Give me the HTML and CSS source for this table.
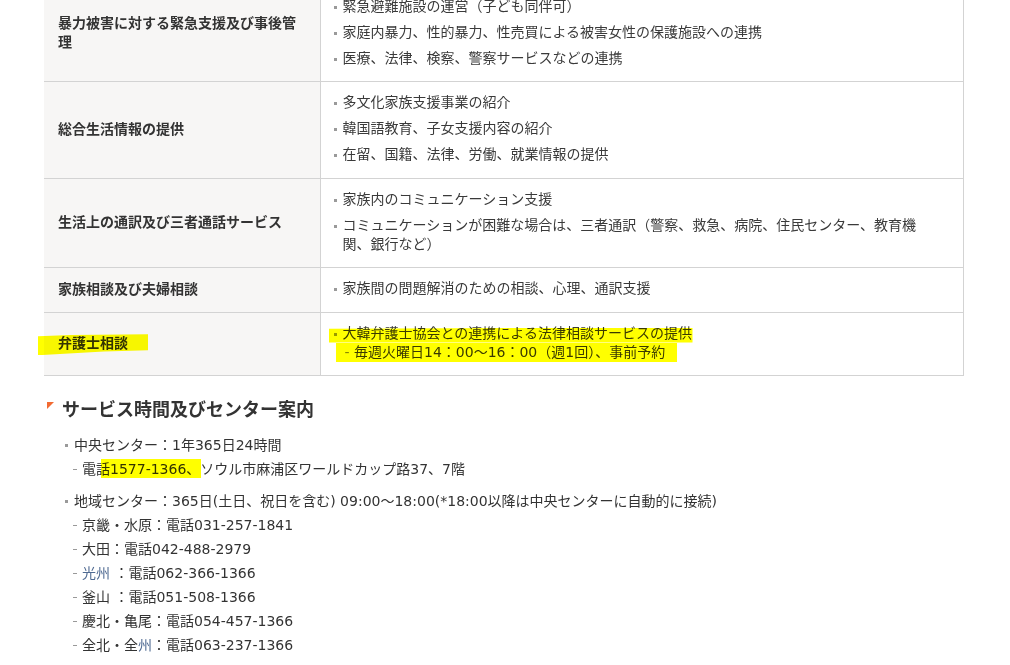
FILE: index.html
```html
<!DOCTYPE html>
<html lang="ja">
<head>
   <meta charset="UTF-8">
   <meta name="viewport" content="width=device-width, initial-scale=1.0">
   <title>サービス案内</title>
   <link rel="stylesheet" href="styles.css">
</head>
<body>
   <div class="page">
      <table class="svc-table">
         <colgroup>
            <col class="col-head">
            <col class="col-body">
         </colgroup>
         <tr>
            <th>暴力被害に対する緊急支援及び事後管理</th>
            <td>
               <ul class="dots">
                  <li>緊急避難施設の運営（子ども同伴可）</li>
                  <li>家庭内暴力、性的暴力、性売買による被害女性の保護施設への連携</li>
                  <li>医療、法律、検察、警察サービスなどの連携</li>
               </ul>
            </td>
         </tr>
         <tr>
            <th>総合生活情報の提供</th>
            <td>
               <ul class="dots">
                  <li>多文化家族支援事業の紹介</li>
                  <li>韓国語教育、子女支援内容の紹介</li>
                  <li>在留、国籍、法律、労働、就業情報の提供</li>
               </ul>
            </td>
         </tr>
         <tr>
            <th>生活上の通訳及び三者通話サービス</th>
            <td>
               <ul class="dots">
                  <li>家族内のコミュニケーション支援</li>
                  <li>コミュニケーションが困難な場合は、三者通訳（警察、救急、病院、住民センター、教育機関、銀行など）</li>
               </ul>
            </td>
         </tr>
         <tr>
            <th>家族相談及び夫婦相談</th>
            <td>
               <ul class="dots">
                  <li>家族間の問題解消のための相談、心理、通訳支援</li>
               </ul>
            </td>
         </tr>
         <tr>
            <th><span class="hl-wrap"><span class="mark mark-head"></span>弁護士相談</span></th>
            <td>
               <ul class="dots">
                  <li>
                     <span class="mark mark-line1"></span>
                     <span class="mark mark-line2"></span>
                     大韓弁護士協会との連携による法律相談サービスの提供<br>
                     <span class="sub-note"><span class="dash">-</span> 毎週火曜日14：00～16：00（週1回）、事前予約</span>
                  </li>
               </ul>
            </td>
         </tr>
      </table>

      <div class="guide">
         <h3>サービス時間及びセンター案内</h3>
         <ul class="info">
            <li>中央センター：1年365日24時間
               <ul class="sub">
                  <li><span class="mark mark-phone"></span>電話1577-1366、ソウル市麻浦区ワールドカップ路37、7階</li>
               </ul>
            </li>
            <li>地域センター：365日(土日、祝日を含む) 09:00～18:00(*18:00以降は中央センターに自動的に接続)
               <ul class="sub">
                  <li>京畿・水原：電話031-257-1841</li>
                  <li>大田：電話042-488-2979</li>
                  <li><span class="blue">光州</span> ：電話062-366-1366</li>
                  <li>釜山 ：電話051-508-1366</li>
                  <li>慶北・亀尾：電話054-457-1366</li>
                  <li>全北・全<span class="blue">州</span>：電話063-237-1366</li>
               </ul>
            </li>
         </ul>
      </div>
   </div>
</body>
</html>
```

FILE: styles.css
```css
body {
   margin: 0;
   font-family: "DejaVu Sans", "Noto Sans CJK JP", sans-serif;
   font-size: 14px;
   color: #333;
   background: #fff;
}
ul {
   list-style: none;
   margin: 0;
   padding: 0;
}
.page {
   margin-top: -15.5px;
   padding-left: 44px;
}

/* service table */
.svc-table {
   width: 920px;
   border-collapse: collapse;
   table-layout: fixed;
   border-top: 1px solid #d3d3d3;
   border-right: 1px solid #d3d3d3;
}
.col-head {
   width: 276px;
}
.svc-table th,
.svc-table td {
   border-bottom: 1px solid #d3d3d3;
   vertical-align: middle;
   line-height: 19px;
}
.svc-table th {
   padding: 0 14px;
   background: #f7f6f5;
   text-align: left;
   font-weight: bold;
   color: #333;
}
.svc-table td {
   border-left: 1px solid #d3d3d3;
   padding: 11px 40px 13.5px 12px;
   color: #3a3a3a;
}
.dots li {
   position: relative;
   padding-left: 10px;
}
.dots li + li {
   margin-top: 7px;
}
.dots li::before {
   content: "";
   position: absolute;
   left: 1px;
   top: 9px;
   width: 3px;
   height: 3px;
   background: #9a9a9a;
}
.sub-note {
   padding-left: 2px;
}
.dash {
   color: #888;
}

/* marker highlights */
.hl-wrap {
   position: relative;
}
.mark {
   position: absolute;
   background: #ffff00;
   mix-blend-mode: multiply;
   pointer-events: none;
}
.mark-head {
   left: -20px;
   width: 110px;
   top: -1px;
   height: 21px;
   clip-path: polygon(0 10%, 30% 4%, 100% 0, 100% 76%, 60% 82%, 0 100%);
}
.mark-line1 {
   left: -4px;
   width: 364px;
   top: 4px;
   height: 15px;
   clip-path: polygon(0 8%, 100% 0, 100% 100%, 0 100%);
}
.mark-line2 {
   left: 3px;
   width: 341px;
   top: 19px;
   height: 19px;
}
.mark-phone {
   left: 19px;
   width: 100px;
   top: 2px;
   height: 19px;
}

/* guide section */
.guide {
   margin-top: 21px;
}
.guide h3 {
   position: relative;
   margin: 0;
   padding-left: 18px;
   font-size: 18px;
   line-height: 26px;
   font-weight: bold;
   color: #333;
}
.guide h3::before {
   content: "";
   position: absolute;
   left: 3px;
   top: 5px;
   width: 0;
   height: 0;
   border-top: 7px solid #f26a32;
   border-right: 7px solid transparent;
}
.info {
   margin-top: 10px;
   padding-left: 30px;
}
.info > li {
   position: relative;
   line-height: 24px;
}
.info > li + li {
   margin-top: 8px;
}
.info > li::before {
   content: "";
   position: absolute;
   left: -9px;
   top: 11px;
   width: 3px;
   height: 3px;
   background: #9a9a9a;
}
.sub {
   padding-left: 8px;
}
.sub li {
   position: relative;
}
.sub li::before {
   content: "";
   position: absolute;
   left: -9px;
   top: 12px;
   width: 4px;
   height: 1px;
   background: #999;
}
.blue {
   color: #4f6a92;
}
```
